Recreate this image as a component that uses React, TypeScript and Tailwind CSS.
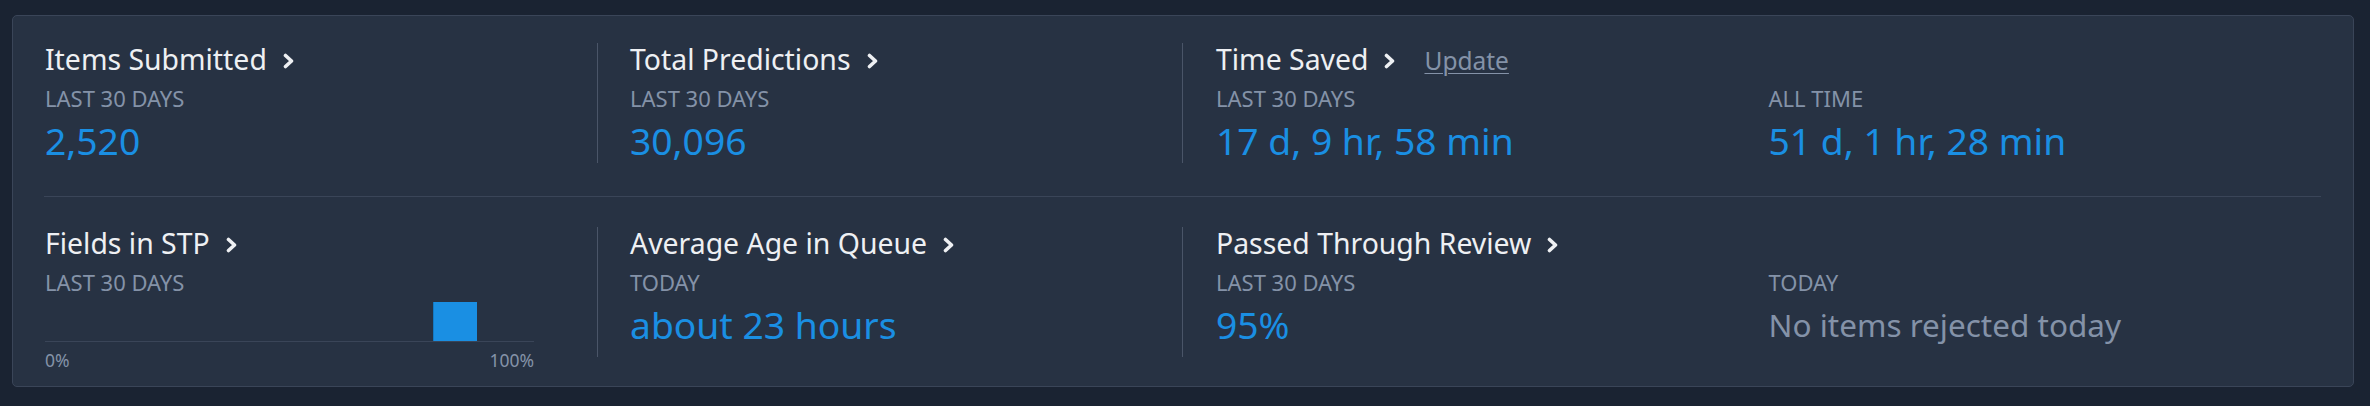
import React, { ReactNode } from "react";

function Chevron() {
  return (
    <svg width="12" height="16" viewBox="0 0 12 16" className="self-center mt-[3px] shrink-0">
      <path
        d="M2.5 2.5 L8.5 8 L2.5 13.5"
        fill="none"
        stroke="#eef0f3"
        strokeWidth="3.6"
        strokeLinecap="round"
        strokeLinejoin="round"
      />
    </svg>
  );
}

function Title({ children, extra }: { children: ReactNode; extra?: ReactNode }) {
  return (
    <div className="flex items-baseline h-[32px]">
      <span className="text-[28.4px] leading-[32px] text-[#eef0f3] whitespace-nowrap">{children}</span>
      <span className="ml-[16px] flex self-center">
        <Chevron />
      </span>
      {extra}
    </div>
  );
}

function Label({ children }: { children: ReactNode }) {
  return <div className="mt-[9px] text-[22px] leading-[28px] text-[#8492a8] uppercase whitespace-nowrap">{children}</div>;
}

function Value({ children, muted }: { children: ReactNode; muted?: boolean }) {
  return (
    <div
      className={
        "mt-[7px] leading-[44px] whitespace-nowrap " +
        (muted ? "text-[31.5px] text-[#8492a8]" : "text-[37.25px] text-[#1a8fe3]")
      }
    >
      {children}
    </div>
  );
}

function Stat({ title, label, value, extra }: { title: string; label: string; value: string; extra?: ReactNode }) {
  return (
    <div className="flex flex-col">
      <Title extra={extra}>{title}</Title>
      <Label>{label}</Label>
      <Value>{value}</Value>
    </div>
  );
}

function StpChart() {
  return (
    <div className="flex flex-col">
      <Title>Fields in STP</Title>
      <Label>Last 30 days</Label>
      <div className="mt-[6px] w-[489px] h-[40px] border-b border-[#3a4558] flex items-end">
        <div className="ml-[388px] w-[44px] h-[39px] bg-[#1a8fe3] border-l border-[#1479c2]" />
      </div>
      <div className="mt-[6px] -mb-[15px] w-[489px] flex justify-between text-[17.5px] leading-[24px] text-[#8492a8]">
        <span>0%</span>
        <span>100%</span>
      </div>
    </div>
  );
}

function App() {
  return (
    <div className="min-h-screen w-full bg-[#1a2332] pt-[15px] font-['Noto_Sans',sans-serif]">
      <div className="ml-[12px] w-[2342px] rounded-[5px] border border-[#3a4558] bg-[#273243] px-[32px] pt-[27px] pb-[29px]">
        <div className="grid grid-cols-[552px_585px_1fr]">
          <Stat title="Items Submitted" label="Last 30 days" value="2,520" />
          <div className="border-l border-[#4a5568] pl-[32px]">
            <Stat title="Total Predictions" label="Last 30 days" value="30,096" />
          </div>
          <div className="border-l border-[#4a5568] pl-[33px] flex flex-col">
            <Title
              extra={
                <a className="ml-[28px] text-[24.5px] leading-[32px] text-[#8492a8] underline decoration-1 underline-offset-[3px] cursor-pointer">
                  Update
                </a>
              }
            >
              Time Saved
            </Title>
            <div className="grid grid-cols-2">
              <div>
                <Label>Last 30 days</Label>
                <Value>17 d, 9 hr, 58 min</Value>
              </div>
              <div>
                <Label>All time</Label>
                <Value>51 d, 1 hr, 28 min</Value>
              </div>
            </div>
          </div>
        </div>

        <div className="mt-[33px] -ml-[1px] h-px bg-[#3a4558]" />

        <div className="mt-[30px] grid grid-cols-[552px_585px_1fr]">
          <StpChart />
          <div className="border-l border-[#4a5568] pl-[32px]">
            <Stat title="Average Age in Queue" label="Today" value="about 23 hours" />
          </div>
          <div className="border-l border-[#4a5568] pl-[33px] flex flex-col">
            <Title>Passed Through Review</Title>
            <div className="grid grid-cols-2">
              <div>
                <Label>Last 30 days</Label>
                <Value>95%</Value>
              </div>
              <div>
                <Label>Today</Label>
                <Value muted>No items rejected today</Value>
              </div>
            </div>
          </div>
        </div>
      </div>
    </div>
  );
}

export default App;
